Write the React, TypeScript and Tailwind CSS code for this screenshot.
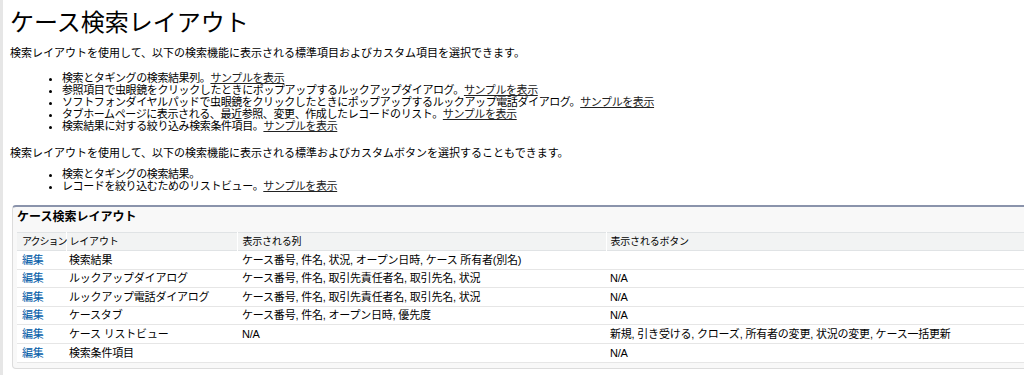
// App.tsx - ケース検索レイアウト help page

const rows = [
  { layout: "検索結果", columns: "ケース番号, 件名, 状況, オープン日時, ケース 所有者(別名)", buttons: "" },
  { layout: "ルックアップダイアログ", columns: "ケース番号, 件名, 取引先責任者名, 取引先名, 状況", buttons: "N/A" },
  { layout: "ルックアップ電話ダイアログ", columns: "ケース番号, 件名, 取引先責任者名, 取引先名, 状況", buttons: "N/A" },
  { layout: "ケースタブ", columns: "ケース番号, 件名, オープン日時, 優先度", buttons: "N/A" },
  { layout: "ケース リストビュー", columns: "N/A", buttons: "新規, 引き受ける, クローズ, 所有者の変更, 状況の変更, ケース一括更新" },
  { layout: "検索条件項目", columns: "", buttons: "N/A" },
];

function Sample() {
  return <a className="underline text-[#222]">サンプルを表示</a>;
}

export default function App() {
  return (
    <div
      className="flex w-[1024px] h-[375px] overflow-hidden bg-white text-black"
      style={{ fontFamily: '"Liberation Sans", "Noto Sans CJK JP", sans-serif' }}
    >
      {/* 左端のグレーの帯 */}
      <div className="w-[3px] shrink-0 bg-[#e6e6e6]" />

      <div className="pl-[7px] flex-1">
        <h1 className="pt-[9px] text-[24px] leading-[28px] font-normal">ケース検索レイアウト</h1>

        <p className="mt-[9px] text-[11px] leading-[14px]">
          検索レイアウトを使用して、以下の検索機能に表示される標準項目およびカスタム項目を選択できます。
        </p>
        <ul className="mt-[12px] list-disc pl-[52px] text-[11px] leading-[12px] tracking-[-0.4px]">
          <li>検索とタギングの検索結果列。<Sample /></li>
          <li>参照項目で虫眼鏡をクリックしたときにポップアップするルックアップダイアログ。<Sample /></li>
          <li>ソフトフォンダイヤルパッドで虫眼鏡をクリックしたときにポップアップするルックアップ電話ダイアログ。<Sample /></li>
          <li>タブホームページに表示される、最近参照、変更、作成したレコードのリスト。<Sample /></li>
          <li>検索結果に対する絞り込み検索条件項目。<Sample /></li>
        </ul>

        <p className="mt-[14px] text-[11px] leading-[14px]">
          検索レイアウトを使用して、以下の検索機能に表示される標準およびカスタムボタンを選択することもできます。
        </p>
        <ul className="mt-[8px] list-disc pl-[52px] text-[11px] leading-[12px] tracking-[-0.4px]">
          <li>検索とタギングの検索結果。</li>
          <li>レコードを絞り込むためのリストビュー。<Sample /></li>
        </ul>

        {/* 関連リスト風のボックス */}
        <div className="mt-[13px] ml-[2px] w-[1030px] rounded-[4px] border border-t-2 border-[#dcdcdc] border-t-[#8a93ab] bg-[#f8f8f8] pb-[5px]">
          <h3 className="pl-[4px] pt-[2px] text-[12px] leading-[16px] font-bold">ケース検索レイアウト</h3>
          <table className="mt-[7px] ml-[4px] w-[1020px] border-collapse table-fixed text-[11px] tracking-[-0.2px]">
            <colgroup>
              <col className="w-[49px]" />
              <col className="w-[171px]" />
              <col className="w-[369px]" />
              <col />
            </colgroup>
            <thead>
              <tr className="h-[18px] bg-[#f2f3f3] border-y border-[#e0e3e5] text-[10px] text-left whitespace-nowrap">
                <th className="pl-[5px] font-normal tracking-[-1px]">アクション</th>
                <th className="pl-[3px] font-normal border-l border-white">レイアウト</th>
                <th className="pl-[5px] font-normal border-l border-white">表示される列</th>
                <th className="pl-[4px] font-normal border-l border-white">表示されるボタン</th>
              </tr>
            </thead>
            <tbody className="bg-white whitespace-nowrap">
              {rows.map((r) => (
                <tr key={r.layout} className="h-[18.6px] border-b border-[#e6e6e6]">
                  <td className="pl-[5px]">
                    <a className="text-[#015ba7]">編集</a>
                  </td>
                  <td className="pl-[3px]">{r.layout}</td>
                  <td className="pl-[5px]">{r.columns}</td>
                  <td className="pl-[4px]">{r.buttons}</td>
                </tr>
              ))}
            </tbody>
          </table>
        </div>
      </div>
    </div>
  );
}
